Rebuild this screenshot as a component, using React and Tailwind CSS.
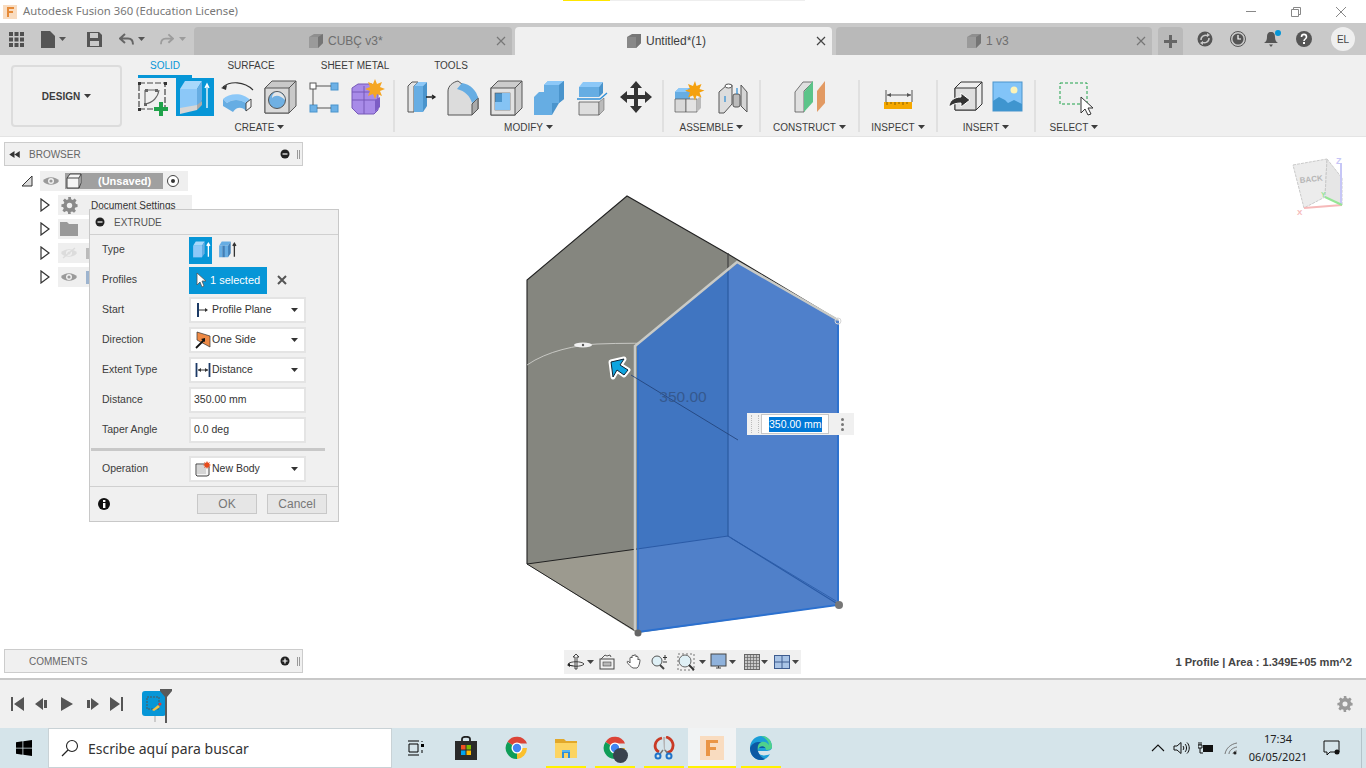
import React from "react";

const S = ({ w = 38, h = 38, vb, children, className = "" }) => (
  <svg width={w} height={h} viewBox={vb || `0 0 ${w} ${h}`} className={`block shrink-0 ${className}`}>{children}</svg>
);
const Caret = ({ c = "#3c3c3c", className = "" }) => (
  <svg width="7" height="4" viewBox="0 0 7 4" className={`inline-block shrink-0 ${className}`}><path d="M0 0h7L3.5 4z" fill={c} /></svg>
);
const B1 = "#8cc8f8", B2 = "#66ade3", B3 = "#4a94cc", EDGE = "#555";

const Sketch = () => (
  <S>
    <rect x="6" y="5" width="26" height="26" fill="none" stroke="#444" strokeWidth="1.2" strokeDasharray="6 2" />
    {[[5,4],[31,4],[5,30],[31,30]].map(([x,y],i)=><rect key={i} x={x} y={y} width="3" height="3" fill="#333" />)}
    <path d="M12 12h12M12 12v14M12 26c8-1 13-7 14-14" fill="none" stroke="#666" strokeWidth="1.1" />
    <rect x="12" y="11" width="3" height="3" fill="#666" /><rect x="22" y="11" width="3" height="3" fill="#666" /><rect x="11" y="25" width="3" height="3" fill="#666" />
    <path d="M26 24h4v5h5v4h-5v5h-4v-5h-5v-4h5z" fill="#1fa24a" />
  </S>
);
const ExtrudeIcon = () => (
  <S>
    <path d="M4 11 9 3h17l-5 8z" fill="#a8d8fb" /><path d="M4 11h17v20L4 33z" fill={B1} /><path d="M21 11l5-8v19l-5 9z" fill={B2} />
    <path d="M4 30l17-3v5l-17 4z" fill="#d6d6d6" /><path d="M21 27l5-4v4l-5 5z" fill="#aaa" />
    <path d="M31 30V7M29 10l2-4 2 4" fill="none" stroke="#fff" strokeWidth="1.3" />
  </S>
);
const Revolve = () => (
  <S>
    <path d="M4 9C11 3 25 3 34 12" fill="none" stroke="#333" strokeWidth="1.1" /><path d="M2 10l6-3-1 5z" fill="#333" />
    <path d="M4 21C10 15 24 14 31 22L27 25C21 21 13 21 8 25Z" fill={B1} />
    <path d="M4 21V28L14 34C17 29 23 28 27 33V25C21 21 13 21 8 25Z" fill={B2} />
    <path d="M27 25L32 21V29L27 33Z" fill="#f4f4f4" stroke="#333" strokeWidth=".9" />
  </S>
);
const Hole = () => (
  <S>
    <path d="M3 10l7-7h24v25l-7 7H3z" fill="#c9c9c9" stroke={EDGE} /><path d="M3 10h24v25H3z" fill="#dadada" stroke={EDGE} /><path d="M27 10l7-7" stroke={EDGE} />
    <circle cx="15" cy="22" r="8.5" fill="#6fb0e3" stroke="#555" /><path d="M15 14c4 0 8 4 8 8-4-4-9-6-13-2 0-3 2-6 5-6z" fill="#e6e6e6" />
  </S>
);
const Pattern = () => (
  <S>
    <rect x="5" y="5" width="6" height="6" fill="#fff" stroke="#555" /><rect x="26" y="5" width="7" height="7" fill="#6db1e6" stroke="#4a94cc" /><rect x="5" y="27" width="7" height="7" fill="#6db1e6" stroke="#4a94cc" /><rect x="26" y="27" width="7" height="7" fill="#6db1e6" stroke="#4a94cc" />
    <path d="M11 8h15M8 11v16M12 30h14" stroke="#555" />
  </S>
);
const FormIcon = () => (
  <S>
    <path d="M4 10l6-4h14l6 6v20l-4 4H10l-6-6z" fill="#a88be8" stroke="#7658b8" />
    <path d="M4 22h24M16 8v28M4 14h22" stroke="#7658b8" /><path d="M27 22l5-3v10l-5 5z" fill="#7c5dc5" />
    <path d="M27 1l2 5 5-2-2 5 5 2-5 2 2 5-5-2-2 5-2-5-5 2 2-5-5-2 5-2-2-5 5 2z" fill="#f5a623" />
  </S>
);
const PressPull = () => (
  <S>
    <path d="M6 8l4-4h6l-4 4v26H6z" fill="#e4e4e4" stroke={EDGE} /><path d="M12 8l4-4h9l-4 4z" fill={B1} /><path d="M12 8h9v26h-9z" fill={B2} /><path d="M21 8l4-4v24l-4 6z" fill={B3} />
    <path d="M24 19h8M30 17l3 2-3 2" fill="none" stroke="#222" strokeWidth="1.3" />
  </S>
);
const Fillet = () => (
  <S>
    <path d="M3 13C3 8 8 4 13 3l17 13 3 4v11l-6 6H3z" fill="#dcdcdc" stroke={EDGE} /><path d="M27 37l6-6V20l-6 6z" fill="#aaa" stroke={EDGE} />
    <path d="M17 5c8 1 15 8 16 15l-6 5C25 18 20 13 12 11z" fill={B2} />
  </S>
);
const Shell = () => (
  <S>
    <path d="M3 10l7-7h24v27l-7 7H3z" fill="#ccc" stroke={EDGE} /><rect x="3" y="10" width="24" height="27" fill="#e2e2e2" stroke={EDGE} /><path d="M27 10l7-7" stroke={EDGE} />
    <rect x="7" y="15" width="15" height="17" fill={B3} stroke="#555" strokeWidth=".6" /><path d="M14 15h8v17H7v-8h7z" fill={B1} opacity=".9" />
  </S>
);
const Combine = () => (
  <S>
    <path d="M13 11V7l4-4h16v18l-5 4H13z" fill={B2} /><path d="M17 3h16l-5 4H13z" fill={B1} /><path d="M28 7l5-4v18l-5 4z" fill={B3} />
    <path d="M3 19h18v18H3z" fill={B2} /><path d="M3 19l5-5h10l-5 5z" fill={B2} /><path d="M21 25h7l-7 12z" fill={B3} />
  </S>
);
const Split = () => (
  <S>
    <path d="M5 9l4-5h20l-4 5z" fill={B1} /><path d="M25 9l4-5v11l-4 4z" fill={B3} /><path d="M5 9h20v10H5z" fill={B2} />
    <path d="M5 24h20v13H5z" fill="#dedede" stroke={EDGE} strokeWidth=".8" /><path d="M25 24l5-4v12l-5 5z" fill="#bbb" stroke={EDGE} strokeWidth=".5" />
    <path d="M3 21h23l7-6" fill="none" stroke="#2f8fd8" strokeWidth="1.3" />
  </S>
);
const Move = () => (
  <S>
    <path d="M19 3l6 7h-4v7h7v-4l7 6-7 6v-4h-7v7h4l-6 7-6-7h4v-7h-7v4l-7-6 7-6v4h7v-7h-4z" fill="#333" />
  </S>
);
const NewComp = () => (
  <S>
    <path d="M4 14l4-4h11v11H4z" fill={B2} /><path d="M4 14l4-4h10l-3 4z" fill={B1} />
    <path d="M4 21h11v13H4z" fill="#d9d9d9" stroke={EDGE} strokeWidth=".7" /><path d="M15 21h11v13H15z" fill="#e3e3e3" stroke={EDGE} strokeWidth=".7" /><path d="M26 21l4-3v12l-4 4z" fill="#bbb" />
    <path d="M24 3l1.500 5 5-2-2 5 5 1.500-5 2 2 5-5-2-1.500 5-2-5-5 2 2-5-5-2 5-1.500-2-5 5 2z" fill="#f5a10f" />
  </S>
);
const Joint = () => (
  <S>
    <path d="M5 14l8-7h5v19l-8 9H5z" fill="#ddd" stroke={EDGE} /><ellipse cx="14.500" cy="8" rx="3.500" ry="2" fill="#fff" stroke={EDGE} />
    <path d="M27 7l6 7v20l-6-6z" fill="#d5d5d5" stroke={EDGE} /><rect x="19" y="16" width="7" height="13" rx="2" fill="#bbb" stroke={EDGE} />
    <path d="M23 10v6M11 18v6" stroke="#2a8cd4" strokeWidth="1.2" />
  </S>
);
const Construct = () => (
  <S>
    <path d="M4 14l8-10h10l-9 9v21H4z" fill="#e0e0e0" stroke={EDGE} strokeWidth=".8" /><path d="M13 14l9-11v21l-9 10z" fill="#5cc489" /><path d="M26 13l8-10v22l-8 9z" fill="#e29a63" />
  </S>
);
const Measure = () => (
  <S>
    <path d="M7 12v12M33 12v12M8 17h24" stroke="#555" /><path d="M8 17l4-2v4zM32 17l-4-2v4z" fill="#555" />
    <rect x="5" y="24" width="28" height="7" fill="#f5a800" /><path d="M8 24v3M12 24v2M16 24v3M20 24v2M24 24v3M28 24v2" stroke="#8a6100" />
  </S>
);
const InsertD = () => (
  <S>
    <path d="M9 10l6-6h21v22l-6 6H9z" fill="#eee" stroke="#333" /><path d="M9 10h21v22H9z" fill="#dfdfdf" stroke="#333" /><path d="M30 10l6-6" stroke="#333" />
    <path d="M3 29c0-6 5-10 12-10v-4l9 7-9 7v-4c-5 0-8 1-12 4z" fill="#333" stroke="#fff" />
  </S>
);
const InsertImg = () => (
  <S>
    <rect x="4" y="4" width="29" height="29" fill="#82c4f8" stroke="#4a94cc" /><circle cx="25" cy="12" r="3.500" fill="#fdf3b8" />
    <path d="M4 33V23l6-4 6 3 3 3 6-3 8 4v7z" fill="#3f95cf" />
  </S>
);
const SelectIcon = () => (
  <S>
    <rect x="5" y="5" width="27" height="21" fill="none" stroke="#1fa24a" strokeWidth="1" strokeDasharray="3 2" />
    <path d="M26 19v16l4-4 3 6 3-1-3-6h5z" fill="#fff" stroke="#333" />
  </S>
);

const Cube = ({ c = "#8f8f8f", size = 16 }) => (
  <svg width={size} height={size} viewBox="0 0 16 16" className="block shrink-0">
    <path d="M1 4l5-3h9v9l-5 5H1z" fill={c} /><path d="M1 4h9v11H1z" fill="#bdbdbd" opacity=".25" /><path d="M10 4l5-3v9l-5 5z" fill="#757575" />
  </svg>
);

const Group = ({ w, label, children }) => (
  <div className="flex flex-col items-center shrink-0" style={{ width: w }}>
    <div className="flex h-[38px] gap-[5px]">{children}</div>
    <div className="h-[20px] pt-[2px] flex items-center gap-[3px] text-[10px] text-[#3c3c3c]">{label}<Caret /></div>
  </div>
);
const Sep = () => <div className="w-[2px] h-[52px] mt-[2px] bg-[#e0e0e0] shrink-0" />;

const Tab = ({ w, pl, label, active, cube }) => (
  <div className={`flex items-center shrink-0 h-[28px] rounded-t-[4px] ${active ? "bg-[#f0f0f0] text-[#3c3c3c]" : "bg-[#b9b9b9] text-[#6e6e6e]"}`} style={{ width: w, paddingLeft: pl }}>
    <Cube c={cube} />
    <span className="ml-[4px] text-[12px]">{label}</span>
    <svg width="10" height="10" viewBox="0 0 10 10" className="ml-auto mr-[6px]"><path d="M1 1l8 8M9 1l-8 8" stroke={active ? "#444" : "#777"} strokeWidth="1.200" /></svg>
  </div>
);

const Eye = ({ off }) => (
  <svg width="18" height="12" viewBox="0 0 18 12" className="block shrink-0">
    <path d="M1 6c3-5 13-5 16 0-3 5-13 5-16 0z" fill={off ? "#dcdcdc" : "#9a9a9a"} /><circle cx="9" cy="6" r="3" fill="#f0f0f0" /><circle cx="9" cy="6" r="1.600" fill={off ? "#dcdcdc" : "#9a9a9a"} />
    {off && <path d="M3 11L15 1" stroke="#dcdcdc" strokeWidth="1.400" />}
  </svg>
);
const Gear = ({ size = 18, c = "#8a8a8a" }) => (
  <svg width={size} height={size} viewBox="0 0 18 19" className="block shrink-0">
    <path d="M7.500 0h3l.4 2.500 1.800.8L14.800 1.800l2.100 2.100-1.500 2.100.8 1.800L18 8.200v3l-2.500.4-.8 1.800 1.500 2.100-2.100 2.100-2.100-1.500-1.800.8L10.500 19h-3l-.4-2.600-1.800-.8-2.100 1.500-2.100-2.100 1.500-2.100-.8-1.800L0 11.200v-3l2.400-.4.800-1.800-1.500-2.100 2.100-2.100 2.100 1.500 1.800-.8z" fill={c} />
    <circle cx="9" cy="9.500" r="3" fill="#f0f0f0" />
  </svg>
);
const Tri = () => (
  <svg width="10" height="14" viewBox="0 0 10 14" className="block shrink-0"><path d="M1 1l8 6-8 6z" fill="#fff" stroke="#333" strokeWidth="1.200" /></svg>
);
const TreeRow = ({ icon, children }) => (
  <div className="flex items-center h-[24px] pl-[36px]">
    <Tri />
    <div className="ml-[8px] w-[134px] h-[20px] bg-[#efefef] flex items-center pl-[2px] text-[10px] text-[#333]">
      <div className="w-[18px] flex justify-center">{icon}</div>
      {children}
    </div>
  </div>
);

const Field = ({ icon, label, select = true }) => (
  <div className="w-[117px] h-[26px] bg-white border-2 border-[#e4e4e4] flex items-center pl-[3px] pr-[6px] text-[10.500px] text-[#333]">
    {icon && <span className="w-[18px] flex justify-center">{icon}</span>}
    <span>{label}</span>
    {select && <Caret c="#333" className="ml-auto" />}
  </div>
);
const Row = ({ label, children }) => (
  <div className="flex items-center h-[30px] pl-[12px]">
    <span className="w-[87px] text-[10.500px] text-[#3c3c3c]">{label}</span>
    {children}
  </div>
);

const Arrowhead = ({ c = "#fff" }) => (
  <svg width="11" height="16" viewBox="0 0 11 16" className="block shrink-0"><path d="M1 1v12l3-3 2 5 2-1-2-5h4z" fill={c} stroke="#555" strokeWidth=".8" /></svg>
);

const Model = () => (
  <svg width="400" height="470" viewBox="500 180 400 470" className="absolute left-[500px] top-[43px]">
    <polygon points="527,280 627,196 728,254 839,321 839,605 637,633 527,564" fill="#85867f" />
    <polygon points="527,564 637,549 637,632" fill="#9c9a8f" />
    <path d="M527 564V280L627 196 728 254 838 320" fill="none" stroke="#222" strokeWidth="1.100" />
    <path d="M527 564L637 549" stroke="#222" strokeWidth="1" /><path d="M527 564L634 630" stroke="#222" strokeWidth="1" />
    <path d="M728 253V272" stroke="#444" strokeWidth="1.300" />
    <path d="M527 365c20-14 50-20 70-21 25-1 50-1 75 0" fill="none" stroke="#d8d8d4" strokeWidth=".8" />
    <ellipse cx="583" cy="345" rx="9" ry="2.500" fill="#f0f0f0" /><circle cx="583" cy="345" r="1.200" fill="#555" />
    <polygon points="637,345 738,263 839,321 839,605 637,632" fill="#4f80cb" />
    <polygon points="637,345 728,271 728,536 637,549" fill="#4075c1" />
    <polygon points="637,549 728,536 838,604 637,632" fill="#5080c9" />
    <path d="M728 271V536" stroke="#2c5ca3" strokeWidth="1.300" />
    <path d="M637 549L728 536 836 603" fill="none" stroke="#2a5aa6" strokeWidth="1.200" />
    <path d="M731 538L836 601" stroke="#2a5aa6" strokeWidth=".8" />
    <path d="M638 632L838 605V325" fill="none" stroke="#2b70cf" strokeWidth="1.800" />
    <path d="M638 632V350" stroke="#2b70cf" strokeWidth="1.200" />
    <path d="M635 630V346L737 262 838 320" fill="none" stroke="#c9cac6" strokeWidth="2.500" />
    <circle cx="838" cy="321" r="3" fill="none" stroke="#d5d5d5" />
    <circle cx="638" cy="633" r="3.500" fill="#666" /><circle cx="839" cy="605" r="4" fill="#777" />
    <path d="M631 375L738 440" stroke="#1f3f75" strokeWidth=".8" />
    <path d="M611 362L624 359 620 365 628 370 624 375 617 370 613 377Z" fill="#fff" stroke="#fff" strokeWidth="5" strokeLinejoin="round" />
    <path d="M611 362L624 359 620 365 628 370 624 375 617 370 613 377Z" fill="#0ea5e0" stroke="#123" strokeWidth="1" strokeLinejoin="round" />
  </svg>
);

const ViewCube = () => (
  <svg width="56" height="62" viewBox="0 0 56 62" className="absolute left-[1289px] top-[18px] opacity-80">
    <path d="M4 10L38 4 36 42 15 53z" fill="#e8e8e8" stroke="#bdbdbd" strokeDasharray="3 1" />
    <path d="M38 4L53 23V50L36 42z" fill="#e0e0e0" stroke="#bdbdbd" strokeDasharray="3 1" />
    <path d="M15 53L53 50" stroke="#f4a8a8" strokeWidth="2" /><path d="M52 50V8" stroke="#b9b9f5" strokeWidth="2" /><path d="M53 50L36 42" stroke="#7be07b" strokeWidth="2" />
    <text x="11" y="28" fontFamily="Liberation Sans" fontSize="8" fontWeight="700" fill="#a5a5a5" transform="rotate(-6 11 28)">BACK</text>
    <text x="47" y="9" fontFamily="Liberation Sans" fontSize="9" fontWeight="700" fill="#b9b9f5">Z</text>
    <text x="8" y="60" fontFamily="Liberation Sans" fontSize="8" fontWeight="700" fill="#f4a8a8">X</text>
    <text x="32" y="42" fontFamily="Liberation Sans" fontSize="7" fontWeight="700" fill="#7be07b">Y</text>
  </svg>
);

const NavBar = () => (
  <div className="absolute left-[564px] top-[513px] w-[237px] h-[24px] bg-[#f0f0f0] flex items-center pl-[2px]">
    <svg width="20" height="20" viewBox="0 0 20 20"><path d="M10 2l3 3h-2v12H9V5H7zM2 12c2-3 14-3 16 0-2 3-14 3-16 0z" fill="none" stroke="#333" strokeWidth=".9" /><path d="M9 14l-5-1v-2l-3 2 3 2v-1z" fill="#222" /></svg>
    <Caret c="#444" className="ml-[1px]" />
    <svg width="18" height="18" viewBox="0 0 18 18" className="ml-[4px]"><rect x="2" y="6" width="14" height="10" fill="#f0f0f0" stroke="#444" /><rect x="5" y="9" width="8" height="4" fill="#b8b8b8" stroke="#444" strokeWidth=".6" /><path d="M3 6l4-4 2 1 3-1 1 2" fill="none" stroke="#555" /></svg>
    <svg width="18" height="18" viewBox="0 0 18 18" className="ml-[9px]"><path d="M5 10V5c0-1 2-1 2 0V3c0-1 2-1 2 0v-.500c0-1 2-1 2 0V4c0-1 2-1 2 0v3c.500-1 2-1 2 0 0 2-1 7-3 8H8c-2-1-5-4-6-6 0-1 2-1 3 1z" fill="#fff" stroke="#333" strokeWidth=".8" /></svg>
    <svg width="20" height="18" viewBox="0 0 20 18" className="ml-[7px]"><circle cx="7" cy="8" r="5" fill="#dff0f6" stroke="#555" /><path d="M10 12l4 4" stroke="#444" strokeWidth="2" /><path d="M15 2v5M13 4.500h4M13 9h4" stroke="#333" /></svg>
    <svg width="19" height="18" viewBox="0 0 19 18" className="ml-[7px]"><rect x="1" y="1" width="16" height="16" fill="none" stroke="#777" strokeDasharray="2 2" /><circle cx="8" cy="8" r="6" fill="#dff0f6" stroke="#666" /><path d="M12 12l5 5" stroke="#333" strokeWidth="2" /></svg>
    <Caret c="#444" className="ml-[3px]" />
    <svg width="18" height="18" viewBox="0 0 18 18" className="ml-[4px]"><rect x="1" y="1" width="15" height="12" fill="#8fb2dc" stroke="#444" /><path d="M6 15h5M8.500 13v2" stroke="#444" /></svg>
    <Caret c="#444" className="ml-[1px]" />
    <svg width="18" height="18" viewBox="0 0 18 18" className="ml-[7px]"><rect x="1.500" y="1.500" width="15" height="15" fill="#c8c8c8" stroke="#666" /><path d="M4.500 1v16M7.500 1v16M10.500 1v16M13.500 1v16M1 4.500h16M1 7.500h16M1 10.500h16M1 13.500h16" stroke="#666" strokeWidth=".7" /></svg>
    <Caret c="#444" className="ml-[0px]" />
    <svg width="18" height="18" viewBox="0 0 18 18" className="ml-[5px]"><rect x="1.500" y="2.500" width="15" height="13" fill="#a9c4e6" stroke="#3e5c8f" /><path d="M9 2v14M1 9h16" stroke="#3e5c8f" /></svg>
    <Caret c="#444" className="ml-[1px]" />
  </div>
);

const PanelEnd = ({ plus }) => (
  <div className="ml-auto flex items-center gap-[3px] pr-[1px]">
    <svg width="10" height="10" viewBox="0 0 10 10"><circle cx="5" cy="5" r="4.500" fill="#222" /><path d={plus ? "M2.500 5h5M5 2.500v5" : "M2.500 5h5"} stroke="#fff" strokeWidth="1.200" /></svg>
    <span className="ml-[4px] h-[9px] w-[3px] border-x border-[#999]" />
  </div>
);

const Transport = ({ d }) => (
  <svg width="14" height="16" viewBox="0 0 14 16" className="block shrink-0"><path d={d} fill="#555" /></svg>
);

const WinLogo = () => (
  <svg width="16" height="16" viewBox="0 0 16 16"><path d="M0 2.200l6.500-.9v6.400H0zM7.300 1.200L16 0v7.700H7.300zM0 8.400h6.500v6.300L0 13.800zM7.300 8.400H16V16l-8.700-1.200z" fill="#000" /></svg>
);
const Chrome = ({ extra }) => (
  <span className="relative block w-[24px] h-[24px] shrink-0">
    <svg width="24" height="24" viewBox="0 0 24 24">
      <path d="M12 12L2.500 6A11 11 0 0 1 22 7.500H12z" fill="#db4437" /><path d="M12 12L12.500 23A11 11 0 0 1 2.500 6z" fill="#0f9d58" /><path d="M12 12H22A11 11 0 0 1 12 23z" fill="#fbc02d" />
      <circle cx="12" cy="12" r="5.500" fill="#fff" /><circle cx="12" cy="12" r="4.200" fill="#4285f4" />
    </svg>
    {extra && <span className="absolute left-[10px] top-[12px] w-[15px] h-[15px] rounded-full bg-[#39424e]" />}
  </span>
);
const Bar = ({ w }) => <span className="absolute bottom-0 left-1/2 -translate-x-1/2 h-[2px] bg-[#fff200]" style={{ width: w }} />;
const TaskItem = ({ w, bg, bar, children }) => (
  <div className={`relative flex items-center justify-center h-[40px] shrink-0 ${bg || ""}`} style={{ width: w }}>
    {children}
    {bar && <Bar w={bar} />}
  </div>
);

export default function App() {
  return (
    <div className="relative w-[1366px] h-[768px] overflow-hidden flex flex-col bg-white font-['Liberation_Sans',sans-serif]">
      {/* title bar */}
      <div className="relative h-[23px] bg-white flex items-center shrink-0">
        <span className="absolute left-[563px] top-0 h-[1px] w-[47px] bg-[#ffe600]" />
        <span className="absolute left-[610px] top-0 h-[1px] w-[195px] bg-[#eee]" />
        <svg width="16" height="16" viewBox="0 0 16 16" className="ml-[2px] mt-[1px]"><rect x="1" y="1" width="14" height="14" fill="#f9dcc0" /><path d="M5 13V3h7v2H7v2h4v2H7v4z" fill="#e58a38" /></svg>
        <span className="ml-[5px] text-[11.300px] text-[#777] font-['Noto_Sans',sans-serif]">Autodesk Fusion 360 (Education License)</span>
        <div className="ml-auto flex items-center mr-[20px] gap-[35px]">
          <span className="block w-[10px] h-[1px] bg-[#888]" />
          <svg width="10" height="10" viewBox="0 0 10 10"><path d="M.5 2.500h7v7h-7zM2.500 2.500v-2h7v7h-2" fill="none" stroke="#888" /></svg>
          <svg width="10" height="10" viewBox="0 0 10 10"><path d="M0 0l10 10M10 0L0 10" stroke="#888" /></svg>
        </div>
      </div>

      {/* tab bar */}
      <div className="h-[32px] bg-[#c9c9c9] flex items-end shrink-0">
        <div className="w-[194px] h-[32px] flex items-center shrink-0 pl-[9px]">
          <svg width="15" height="15" viewBox="0 0 15 15"><path d="M0 0h4v4H0zM5.500 0h4v4h-4zM11 0h4v4h-4zM0 5.500h4v4H0zM5.500 5.500h4v4h-4zM11 5.500h4v4h-4zM0 11h4v4H0zM5.500 11h4v4h-4zM11 11h4v4h-4z" fill="#505050" /></svg>
          <svg width="14" height="17" viewBox="0 0 14 17" className="ml-[17px]"><path d="M0 0h9l5 5v12H0z" fill="#555" /></svg>
          <Caret c="#555" className="ml-[4px]" />
          <svg width="15" height="15" viewBox="0 0 15 15" className="ml-[21px]"><path d="M0 0h12l3 3v12H0z" fill="#555" /><rect x="3" y="1" width="8" height="5" fill="#c9c9c9" /><rect x="3" y="9" width="9" height="5" fill="#c9c9c9" /></svg>
          <svg width="15" height="13" viewBox="0 0 15 13" className="ml-[17px]"><path d="M6 1L1 5.500 6 10M1 5.500h8c3 0 5 2 5 6" fill="none" stroke="#666" strokeWidth="2" /></svg>
          <Caret c="#555" className="ml-[4px]" />
          <svg width="14" height="13" viewBox="0 0 15 13" className="ml-[15px]"><path d="M9 1l5 4.500L9 10M14 5.500H6c-3 0-5 2-5 6" fill="none" stroke="#9c9c9c" strokeWidth="2" /></svg>
          <Caret c="#9c9c9c" className="ml-[5px]" />
        </div>
        <Tab w={318} pl={114} label="CUBÇ v3*" cube="#8f8f8f" />
        <div className="w-[3px]" />
        <Tab w={317} pl={111} label="Untitled*(1)" active cube="#777" />
        <div className="w-[4px]" />
        <Tab w={316} pl={130} label="1 v3" cube="#8f8f8f" />
        <div className="w-[6px]" />
        <div className="w-[25px] h-[28px] bg-[#b9b9b9] rounded-t-[4px] flex items-center justify-center shrink-0">
          <svg width="13" height="13" viewBox="0 0 13 13"><path d="M5 0h3v5h5v3H8v5H5V8H0V5h5z" fill="#666" /></svg>
        </div>
        <div className="flex-1 h-[32px] flex items-center pl-[14px] gap-[17px]">
          <svg width="16" height="16" viewBox="0 0 16 16"><circle cx="8" cy="8" r="7.500" fill="#555" /><path d="M4 9a4.500 4.500 0 0 1 7-4M12 7a4.500 4.500 0 0 1-7 4" fill="none" stroke="#c9c9c9" strokeWidth="1.500" /><path d="M10 2l3 2-3 2zM6 10l-3 2 3 2z" fill="#c9c9c9" /></svg>
          <svg width="16" height="16" viewBox="0 0 16 16"><circle cx="8" cy="8" r="7.500" fill="#c9c9c9" stroke="#555" /><circle cx="8" cy="8" r="5.500" fill="#555" /><path d="M8 4v4h3" fill="none" stroke="#fff" strokeWidth="1.200" /></svg>
          <span className="relative block w-[16px] h-[16px]">
            <svg width="16" height="16" viewBox="0 0 16 16"><path d="M8 1c3 0 4 2 4 5 0 3 1 5 3 6H1c2-1 3-3 3-6 0-3 1-5 4-5zM6 13.500h4L8 16z" fill="#555" /></svg>
            <span className="absolute right-[-2px] top-[-1px] w-[6px] h-[6px] rounded-full bg-[#0696d7]" />
          </span>
          <svg width="16" height="16" viewBox="0 0 16 16"><circle cx="8" cy="8" r="8" fill="#555" /><path d="M5.500 6c0-3.500 5-3.500 5 0 0 2-2.500 2-2.500 4" fill="none" stroke="#fff" strokeWidth="1.600" /><rect x="7" y="11" width="2" height="2" fill="#fff" /></svg>
          <span className="ml-[2px] w-[24px] h-[24px] rounded-full bg-[#efefef] flex items-center justify-center text-[10px] text-[#444]">EL</span>
        </div>
      </div>

      {/* ribbon */}
      <div className="h-[82px] bg-[#f0f0f0] flex shrink-0 border-b border-[#e4e4e4]">
        <div className="w-[126px] shrink-0 pl-[11px] pt-[10px]">
          <div className="w-[111px] h-[62px] border-2 border-[#dcdcdc] rounded-[4px] flex items-center justify-center gap-[4px] text-[10px] font-bold text-[#3c3c3c]">DESIGN<Caret /></div>
        </div>
        <div className="flex flex-col">
          <div className="flex h-[24px] pl-[12px] text-[10px] text-[#3c3c3c]">
            <div className="w-[54px] border-b-[3px] border-[#0696d7] text-[#0696d7] pt-[1px] flex items-center justify-center">SOLID</div>
            <div className="w-[118px] pt-[1px] pb-[3px] flex items-center justify-center">SURFACE</div>
            <div className="w-[90px] pt-[1px] pb-[3px] flex items-center justify-center">SHEET METAL</div>
            <div className="w-[102px] pt-[1px] pb-[3px] flex items-center justify-center">TOOLS</div>
          </div>
          <div className="flex">
            <Group w={267} label="CREATE">
              <Sketch />
              <div className="bg-[#0696d7]"><ExtrudeIcon /></div>
              <Revolve /><Hole /><Pattern /><FormIcon />
            </Group>
            <Sep />
            <Group w={267} label="MODIFY"><PressPull /><Fillet /><Shell /><Combine /><Split /><Move /></Group>
            <Sep />
            <Group w={95} label="ASSEMBLE"><NewComp /><Joint /></Group>
            <Sep />
            <Group w={97} label="CONSTRUCT"><Construct /></Group>
            <Sep />
            <Group w={76} label="INSPECT"><Measure /></Group>
            <Sep />
            <Group w={96} label="INSERT"><InsertD /><InsertImg /></Group>
            <Sep />
            <Group w={76} label="SELECT"><SelectIcon /></Group>
          </div>
        </div>
      </div>

      {/* canvas */}
      <div className="relative h-[541px] bg-white shrink-0">
        <Model />
        <ViewCube />

        <div className="absolute left-[683px] top-[260px] -translate-x-1/2 -translate-y-1/2 text-[15.500px] text-[#35598f]">350.00</div>

        <div className="absolute left-[747px] top-[276px] w-[107px] h-[22px] bg-[#f0f0f0] flex items-center">
          <span className="w-[8px] h-[18px] ml-[4px] border-x border-dotted border-[#bbb]" />
          <div className="ml-[2px] w-[68px] h-[20px] bg-white border border-[#c8c8c8] pl-[7px] flex items-center">
            <span className="bg-[#0078d7] text-white text-[10.500px] leading-[15px] whitespace-nowrap">350.00 mm</span>
          </div>
          <div className="ml-[12px] flex flex-col gap-[2px]">
            <span className="w-[3px] h-[3px] rounded-full bg-[#777]" /><span className="w-[3px] h-[3px] rounded-full bg-[#777]" /><span className="w-[3px] h-[3px] rounded-full bg-[#777]" />
          </div>
        </div>

        {/* browser */}
        <div className="absolute left-[4px] top-[5px] w-[299px]">
          <div className="h-[24px] bg-[#f0f0f0] border border-[#ccc] flex items-center pl-[4px] pr-[1px] text-[10px] text-[#666]">
            <svg width="11" height="7" viewBox="0 0 12 8"><path d="M6 0v8L0 4zM12 0v8L6 4z" fill="#333" /></svg>
            <span className="ml-[9px]">BROWSER</span>
            <PanelEnd />
          </div>
          <div className="flex items-center h-[20px] mt-[5px] pl-[17px]">
            <svg width="12" height="12" viewBox="0 0 12 12"><path d="M11 1v10H1z" fill="#ddd" stroke="#333" /></svg>
            <div className="ml-[7px] w-[148px] h-[20px] bg-[#efefef] flex items-center pl-[2px]">
              <div className="w-[18px] flex justify-center"><Eye /></div>
              <div className="ml-[5px] w-[98px] h-[16px] bg-[#a0a0a0] flex items-center">
                <svg width="18" height="16" viewBox="0 0 18 16"><path d="M2 15V5l3-4h11v9l-2 5z" fill="#f4f4f4" stroke="#444" /><path d="M2 5h12v10M14 5l2-4" fill="none" stroke="#444" /></svg>
                <span className="ml-[15px] text-[11px] font-bold text-white">(Unsaved)</span>
              </div>
              <svg width="14" height="14" viewBox="0 0 14 14" className="ml-[3px]"><circle cx="7" cy="7" r="5.500" fill="#fff" stroke="#444" /><circle cx="7" cy="7" r="2" fill="#333" /></svg>
            </div>
          </div>
          <div className="mt-[2px]">
            <TreeRow icon={<Gear size={17} />}><span className="ml-[13px]">Document Settings</span></TreeRow>
            <TreeRow icon={<svg width="18" height="14" viewBox="0 0 18 14"><path d="M0 0h7l2 2h9v12H0z" fill="#999" /></svg>} />
            <TreeRow icon={<Eye off />}><span className="ml-[8px] w-[4px] h-[11px] bg-[#bbb]" /></TreeRow>
            <TreeRow icon={<Eye />}><span className="ml-[8px] w-[4px] h-[13px] bg-[#9db4cf]" /></TreeRow>
          </div>
        </div>

        {/* extrude */}
        <div className="absolute left-[89px] top-[72px] w-[250px] h-[313px] bg-[#f0f0f0] border border-[#c8c8c8]">
          <div className="h-[25px] border-b border-[#d0d0d0] flex items-center pl-[5px] text-[10px] text-[#555]">
            <svg width="10" height="10" viewBox="0 0 10 10"><circle cx="5" cy="5" r="4.500" fill="#222" /><path d="M2.500 5h5" stroke="#fff" strokeWidth="1.200" /></svg>
            <span className="ml-[9px]">EXTRUDE</span>
          </div>
          <Row label="Type">
            <div className="w-[23px] h-[27px] bg-[#0696d7] flex items-center justify-center"><svg width="20" height="20" viewBox="0 0 38 38"><path d="M4 11 9 3h17l-5 8z" fill="#a8d8fb" /><path d="M4 11h17v22H4z" fill={B1} /><path d="M21 11l5-8v22l-5 8z" fill={B2} /><path d="M33 32V7M30 11l3-5 3 5" fill="none" stroke="#fff" strokeWidth="2.500" /></svg></div>
            <svg width="20" height="20" viewBox="0 0 38 38" className="ml-[5px]"><path d="M4 11 9 3h17l-5 8z" fill={B2} /><path d="M4 11h6v22H4zM15 11h6v22h-6z" fill={B2} /><path d="M21 11l5-8v22l-5 8zM10 11h5v22h-5z" fill="#3f7fb8" /><path d="M33 32V7M30 11l3-5 3 5" fill="none" stroke="#333" strokeWidth="2.500" /></svg>
          </Row>
          <Row label="Profiles">
            <div className="w-[78px] h-[27px] bg-[#0696d7] flex items-center pl-[7px] text-[11px] text-white"><Arrowhead /><span className="ml-[3px]">1 selected</span></div>
            <svg width="10" height="10" viewBox="0 0 10 10" className="ml-[10px]"><path d="M1 1l8 8M9 1L1 9" stroke="#555" strokeWidth="2" /></svg>
          </Row>
          <Row label="Start"><Field label="Profile Plane" icon={<svg width="14" height="16" viewBox="0 0 14 16"><path d="M2 1v14" stroke="#1c3a66" strokeWidth="2" /><path d="M3 8h8" stroke="#333" /><path d="M12 8l-3-2v4z" fill="#333" /></svg>} /></Row>
          <Row label="Direction"><Field label="One Side" icon={<svg width="16" height="18" viewBox="0 0 16 18"><path d="M2 1l13 4v11L2 9z" fill="#ee8a46" stroke="#333" strokeWidth=".7" /><path d="M1 17l8-8" stroke="#111" strokeWidth="1.800" /><path d="M10 7v4l-4-3z" fill="#111" /></svg>} /></Row>
          <Row label="Extent Type"><Field label="Distance" icon={<svg width="16" height="16" viewBox="0 0 16 16"><path d="M1.500 1v14M14.500 1v14" stroke="#1c3a66" strokeWidth="1.800" /><path d="M3 8h10" stroke="#333" /><path d="M3 8l3-2v4zM13 8l-3-2v4z" fill="#333" /></svg>} /></Row>
          <Row label="Distance"><Field label="350.00 mm" select={false} /></Row>
          <Row label="Taper Angle"><Field label="0.0 deg" select={false} /></Row>
          <div className="h-[3px] ml-[1px] w-[234px] mt-[3px] bg-[#c8c8c8]" />
          <div className="mt-[3px]"><Row label="Operation"><Field label="New Body" icon={<svg width="16" height="16" viewBox="0 0 16 16"><path d="M1 3h10l3 2v9l-2 1H2l-1-1z" fill="#f4f4f4" stroke="#444" /><path d="M2 4h9v9H2z" fill="#d5d5d5" /><path d="M12 0l1 2 2-1-1 2 2 1-2 1 1 2-2-1-1 2-1-2-2 1 1-2-2-1 2-1-1-2 2 1z" fill="#e74b1c" /></svg>} /></Row></div>
          <div className="mt-[2px] h-[35px] border-t border-[#d0d0d0] flex items-center pl-[8px]">
            <svg width="12" height="12" viewBox="0 0 12 12"><circle cx="6" cy="6" r="6" fill="#111" /><rect x="5" y="5" width="2.400" height="5" fill="#fff" /><rect x="5" y="2" width="2.400" height="2" fill="#fff" /></svg>
            <div className="ml-[87px] w-[60px] h-[20px] bg-[#e6e6e6] border border-[#c8c8c8] flex items-center justify-center text-[12px] text-[#777]">OK</div>
            <div className="ml-[10px] w-[60px] h-[20px] bg-[#e6e6e6] border border-[#c8c8c8] flex items-center justify-center text-[12px] text-[#777]">Cancel</div>
          </div>
        </div>

        {/* comments */}
        <div className="absolute left-[4px] top-[512px] w-[299px] h-[24px] bg-[#f0f0f0] border border-[#ccc] flex items-center pl-[24px] pr-[1px] text-[10px] text-[#666]">
          COMMENTS
          <PanelEnd plus />
        </div>

        <NavBar />
        <div className="absolute right-[14px] top-[517px] text-[11.100px] font-bold text-[#444]">1 Profile | Area : 1.349E+05 mm^2</div>
      </div>

      {/* timeline */}
      <div className="h-[50px] bg-[#f0f0f0] border-t-2 border-[#c8c8c8] flex items-center shrink-0 pl-[10px]">
        <div className="flex items-center gap-[11px]">
          <Transport d="M1 1h2v14H1zM14 1v14L4 8z" />
          <Transport d="M0 8l8-6v12zM9 4h3v8H9z" />
          <Transport d="M1 1l12 7-12 7z" />
          <Transport d="M14 8L6 2v12zM2 4h3v8H2z" />
          <Transport d="M0 1v14l10-7zM11 1h2v14h-2z" />
        </div>
        <div className="relative ml-[18px] w-[30px] h-[48px]">
          <div className="absolute left-[0px] top-[11px] w-[24px] h-[25px] rounded-[3px] bg-[#0696d7] flex items-center justify-center">
            <svg width="18" height="18" viewBox="0 0 18 18"><rect x="2" y="2" width="12" height="12" fill="none" stroke="#555" strokeDasharray="2 1" /><path d="M7 15l6-5 2 2-6 4z" fill="#f5c242" /><circle cx="15" cy="9" r="1.500" fill="#e53935" /></svg>
          </div>
          <span className="absolute left-[12px] top-[36px] w-[2px] h-[6px] bg-[#ccc]" />
          <svg width="12" height="34" viewBox="0 0 12 34" className="absolute left-[18px] top-[9px]"><path d="M0 0h12v2L7 8v26H5V8L0 2z" fill="#5a5a5a" /></svg>
        </div>
        <div className="ml-auto mr-[13px]"><Gear size={16} c="#9a9a9a" /></div>
      </div>

      {/* taskbar */}
      <div className="h-[40px] bg-[#d5e4ea] flex items-center shrink-0 text-black">
        <div className="w-[48px] flex justify-center"><WinLogo /></div>
        <div className="w-[344px] h-[40px] bg-white border border-[#c9d2d6] flex items-center pl-[12px] shrink-0">
          <svg width="18" height="18" viewBox="0 0 18 18"><circle cx="11" cy="7" r="5.500" fill="none" stroke="#222" strokeWidth="1.100" /><path d="M7 11l-6 6" stroke="#222" strokeWidth="1.300" /></svg>
          <span className="ml-[9px] text-[14px] text-[#333] font-['Noto_Sans',sans-serif]">Escribe aquí para buscar</span>
        </div>
        <TaskItem w={48}><svg width="18" height="16" viewBox="0 0 18 16"><path d="M1 1h11M1 15h11M2 4h9v8H2z" fill="none" stroke="#000" /><rect x="14" y="4" width="3" height="3" fill="#000" /><path d="M15 10v3M15 1v1" stroke="#000" /></svg></TaskItem>
        <TaskItem w={52}><svg width="24" height="25" viewBox="0 0 24 25"><path d="M8 5V3c0-3 8-3 8 0v2" fill="none" stroke="#222" strokeWidth="1.800" /><path d="M1 5h22v19H1z" fill="#2a2a2a" /><rect x="7" y="9" width="4.500" height="4.500" fill="#f25022" /><rect x="12.500" y="9" width="4.500" height="4.500" fill="#7fba00" /><rect x="7" y="14.500" width="4.500" height="4.500" fill="#00a4ef" /><rect x="12.500" y="14.500" width="4.500" height="4.500" fill="#ffb900" /></svg></TaskItem>
        <TaskItem w={49}><Chrome /></TaskItem>
        <TaskItem w={49} bar={40}><svg width="22" height="20" viewBox="0 0 22 20"><path d="M0 1h9l2 2h11v5H0z" fill="#e2a82a" /><path d="M0 5h22v15H0z" fill="#fcd462" /><path d="M7 12h8v8h-2v-5H9v5H7z" fill="#2f8fd8" /><path d="M7 12h8v2H7z" fill="#55b4ee" /></svg></TaskItem>
        <TaskItem w={49} bar={40}><Chrome extra /></TaskItem>
        <TaskItem w={49} bar={40}><svg width="22" height="24" viewBox="0 0 22 24"><path d="M9 2C1 4 0 13 6 16M13 1c7 2 9 9 5 14l-4 2" fill="none" stroke="#c93a25" strokeWidth="2.800" /><path d="M10 1l1 14h1L12 1z" fill="#b5b5b5" /><path d="M10 14l-3 4M12 14l3 4" stroke="#777" strokeWidth="1.500" /><circle cx="5" cy="20" r="2.500" fill="none" stroke="#1f74c9" strokeWidth="2" /><circle cx="16" cy="20" r="2.500" fill="none" stroke="#1f74c9" strokeWidth="2" /></svg></TaskItem>
        <TaskItem w={48} bg="bg-[#f1f3f4]" bar={48}><svg width="24" height="24" viewBox="0 0 24 24"><rect width="24" height="24" fill="#f9dcc0" /><path d="M6 20V4h12v3H10v4h6v3h-6v6z" fill="#ea9545" /></svg></TaskItem>
        <TaskItem w={50} bar={40}><svg width="24" height="24" viewBox="0 0 24 24"><path d="M1 12C1 5 6 0 12 0c7 0 11 5 11 11 0 3-3 4-6 4H9c0 4 6 6 12 3-2 4-6 6-9 6C5 24 1 18 1 12z" fill="#1b9ed8" /><path d="M1 12c2-5 6-6 9-6s7 2 7 6H9c-1 4 2 9 7 11-2 1-3 1-4 1C5 24 1 18 1 12z" fill="#0c59a4" /><path d="M9 15c0-6 8-6 8-1 4 0 6-1 6-3C23 5 19 0 12 0 17 2 20 6 20 9c-4-6-13-4-11 6z" fill="#4fd18b" /></svg></TaskItem>

        <div className="ml-auto flex items-center">
          <svg width="14" height="8" viewBox="0 0 14 8"><path d="M1 7l6-6 6 6" fill="none" stroke="#111" strokeWidth="1.100" /></svg>
          <svg width="17" height="14" viewBox="0 0 17 14" className="ml-[8px]"><path d="M1 5h3l4-3.500v11L4 9H1z" fill="none" stroke="#111" /><path d="M10 5c1 1 1 3 0 4M12 3c2 2 2 6 0 8M14 1.500c3 3 3 8 0 11" fill="none" stroke="#111" /></svg>
          <svg width="16" height="12" viewBox="0 0 16 12" className="ml-[8px]"><rect x="5" y="3" width="10" height="7" fill="#111" /><path d="M3 0v3M1 0v3M0 3h4v3H0zM2 6v5h3" fill="none" stroke="#111" /></svg>
          <svg width="14" height="13" viewBox="0 0 14 13" className="ml-[10px]"><path d="M1 12C2 6 7 2 13 1M5 12c0-3 3-6 8-7M9 12c0-2 2-3 4-3" fill="none" stroke="#777" /><circle cx="11" cy="11" r="1.500" fill="#222" /></svg>
          <div className="w-[70px] ml-[5px] text-center text-[11px] leading-[18px] text-[#222] font-['Noto_Sans',sans-serif]"><div>17:34</div><div>06/05/2021</div></div>
          <svg width="18" height="16" viewBox="0 0 18 16" className="ml-[10px]"><path d="M1 1h15v11H7l-3 3v-3H1z" fill="none" stroke="#111" /><circle cx="14" cy="12" r="2.500" fill="#111" /></svg>
          <span className="ml-[20px] mr-[4px] h-[40px] w-[1px] bg-[#b5c3ca]" />
        </div>
      </div>
    </div>
  );
}
